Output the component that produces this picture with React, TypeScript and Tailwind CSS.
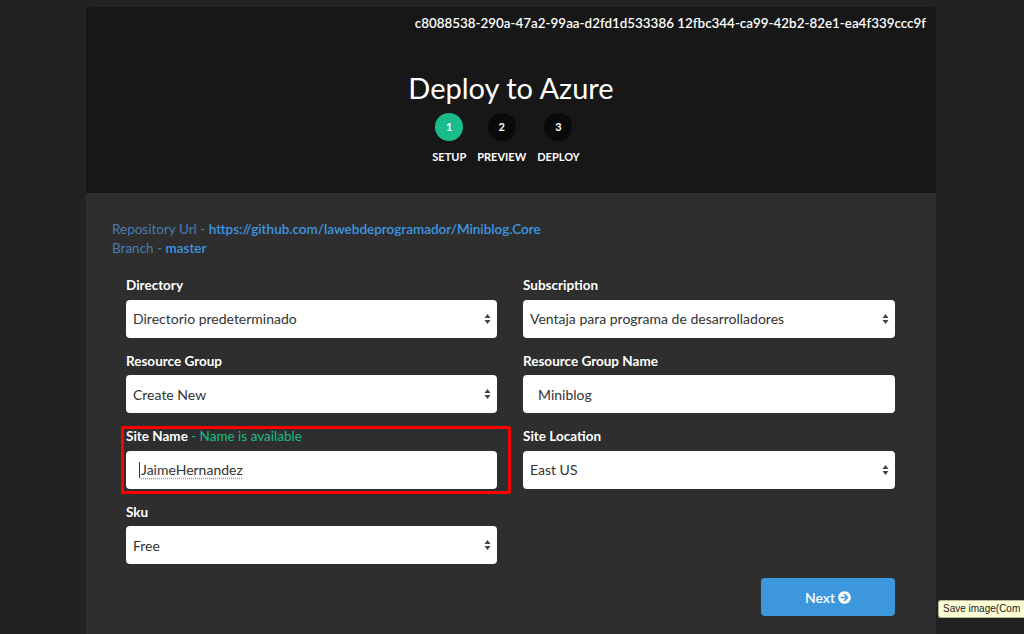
import { FaArrowCircleRight } from "react-icons/fa";

const SelectArrows = () => (
    <svg width="7" height="11" viewBox="0 0 7 11" className="absolute right-[6px] top-1/2 -translate-y-1/2">
        <path d="M3.5 0.5 L6.5 4.5 L0.5 4.5 Z" fill="#444" />
        <path d="M3.5 10.5 L6.5 6.5 L0.5 6.5 Z" fill="#444" />
    </svg>
);

const SelectBox = ({ value }: { value: string }) => (
    <div className="relative h-[38px] w-full rounded-[4px] bg-white flex items-center pl-[7px] text-[14px] text-[#333]">
        {value}
        <SelectArrows />
    </div>
);

const TextBox = ({ value, pad = "pl-[15px]", children }: { value?: string; pad?: string; children?: React.ReactNode }) => (
    <div className={`h-[38px] w-full rounded-[4px] bg-white flex items-center ${pad} text-[14px] text-[#333]`}>
        {value}
        {children}
    </div>
);

const Label = ({ children }: { children: React.ReactNode }) => (
    <div className="text-[13.5px] leading-[18px] font-bold text-white mb-[5.5px]">{children}</div>
);

const steps = [
    { n: "1", label: "SETUP", active: true },
    { n: "2", label: "PREVIEW", active: false },
    { n: "3", label: "DEPLOY", active: false },
];

export default function App() {
    return (
        <div className="relative h-[634px] w-full overflow-hidden bg-[#222222]" style={{ fontFamily: "Lato, 'Open Sans', sans-serif" }}>
            <div className="ml-[86px] mt-[7px] w-[850px] rounded-t-[5px] overflow-hidden">
                {/* header */}
                <div className="h-[186px] bg-[#171717] flex flex-col">
                    <div className="pt-[8px] pr-[10px] text-right text-[13.4px] leading-[17px] font-semibold text-white">
                        c8088538-290a-47a2-99aa-d2fd1d533386 12fbc344-ca99-42b2-82e1-ea4f339ccc9f
                    </div>
                    <h1 className="mt-[38px] text-center text-[29px] leading-[36px] text-white">Deploy to Azure</h1>
                    <div className="mt-[7px] mr-[10px] flex justify-center gap-[11px]">
                        {steps.map((s) => (
                            <div key={s.n} className="flex flex-col items-center">
                                <div className={`h-[28px] w-[28px] rounded-full flex items-center justify-center text-[11px] font-bold text-white ${s.active ? "bg-[#1abc8c]" : "bg-[#0a0a0a]"}`}>
                                    {s.n}
                                </div>
                                <div className="mt-[9px] text-[11px] leading-[14px] font-bold text-white">{s.label}</div>
                            </div>
                        ))}
                    </div>
                </div>

                {/* body */}
                <div className="h-[441px] bg-[#2e2e2e] pt-[27px] px-[26px]">
                    <div className="text-[13.5px] leading-[19px]">
                        <div>
                            <span className="text-[#4a7db5]">Repository Url - </span>
                            <span className="text-[#3d96e2] font-semibold">https://github.com/lawebdeprogramador/Miniblog.Core</span>
                        </div>
                        <div>
                            <span className="text-[#4a7db5]">Branch - </span>
                            <span className="text-[#3d96e2] font-semibold">master</span>
                        </div>
                    </div>

                    <div className="ml-[14px] mt-[18px] w-[769px]">
                        <div className="grid grid-cols-[371px_372px] gap-x-[26px] gap-y-[14px]">
                            <div>
                                <Label>Directory</Label>
                                <SelectBox value="Directorio predeterminado" />
                            </div>
                            <div>
                                <Label>Subscription</Label>
                                <SelectBox value="Ventaja para programa de desarrolladores" />
                            </div>
                            <div>
                                <Label>Resource Group</Label>
                                <SelectBox value="Create New" />
                            </div>
                            <div>
                                <Label>Resource Group Name</Label>
                                <TextBox value="Miniblog" />
                            </div>
                            <div className="relative">
                                <Label>
                                    Site Name <span className="font-normal text-[#1abc8c]">- Name is available</span>
                                </Label>
                                <TextBox pad="pl-[13px]">
                                    <span className="h-[16px] w-px bg-[#333]" />
                                    <span className="ml-px underline decoration-dotted decoration-[#999] underline-offset-[3px]">JaimeHernandez</span>
                                </TextBox>
                                <div className="absolute left-[-5px] top-[-1px] h-[68px] w-[390px] rounded-[2px] border-[3px] border-[#ff0000]" />
                            </div>
                            <div>
                                <Label>Site Location</Label>
                                <SelectBox value="East US" />
                            </div>
                            <div>
                                <Label>Sku</Label>
                                <SelectBox value="Free" />
                            </div>
                        </div>

                        <div className="mt-[14px] flex justify-end">
                            <button className="h-[38px] w-[134px] rounded-[4px] bg-[#3c97dc] flex items-center justify-center gap-[3px] text-[14px] font-semibold text-white">
                                Next <FaArrowCircleRight className="h-[13px] w-[13px]" />
                            </button>
                        </div>
                    </div>
                </div>
            </div>

            {/* browser tooltip */}
            <div className="absolute left-[938px] top-[600px] h-[18px] w-[90px] whitespace-nowrap rounded-l-[3px] border border-r-0 border-[#b5b59a] bg-[#fdfdd6] pl-[4px] text-[10px] leading-[16px] text-[#222]" style={{ fontFamily: "'Liberation Sans', Arial, sans-serif" }}>
                Save image(Com
            </div>
        </div>
    );
}
